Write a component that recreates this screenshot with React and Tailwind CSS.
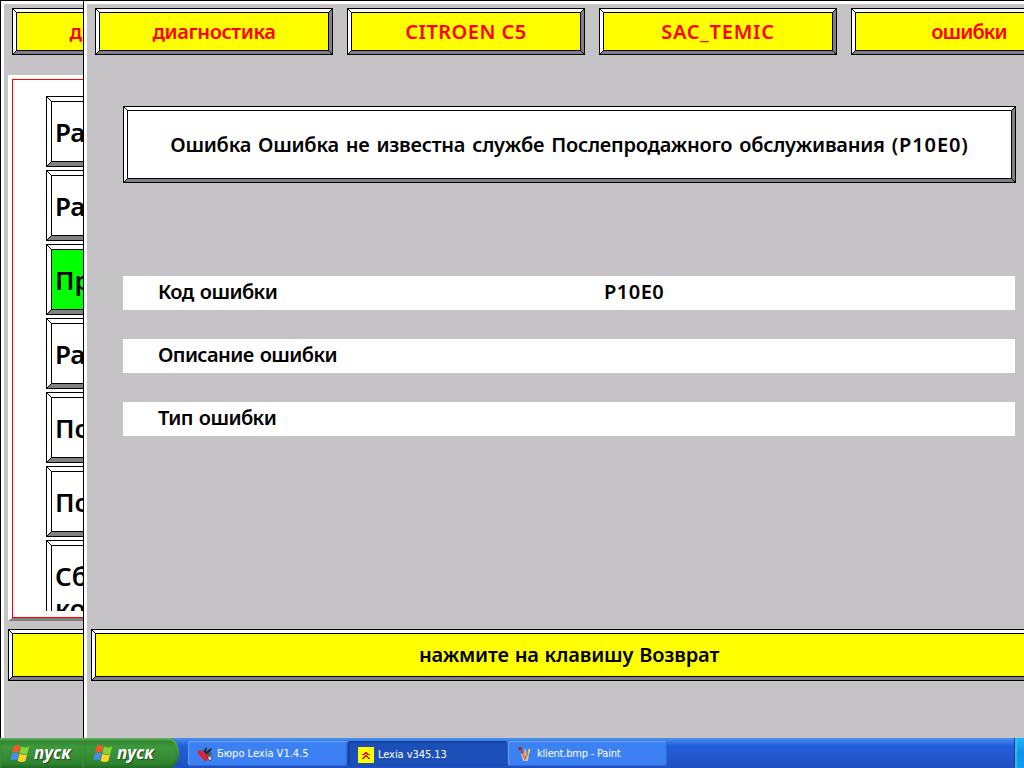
const crumbs = [
  { label: "диагностика", spacing: "tracking-[-0.4px]" },
  { label: "CITROEN C5", spacing: "tracking-[0.5px]" },
  { label: "SAC_TEMIC", spacing: "tracking-[0.8px]" },
  { label: "ошибки", spacing: "tracking-[-0.9px] pr-[2px]" },
];

const menu = [
  { label: "Ра" },
  { label: "Ра" },
  { label: "Пр", active: true },
  { label: "Ра" },
  { label: "По" },
  { label: "По" },
  { label: "Сб", more: "ко" },
];

const rows = [
  { name: "Код ошибки", value: "P10E0" },
  { name: "Описание ошибки", value: "" },
  { name: "Тип ошибки", value: "" },
];

function Corner({ className, size, flip }) {
  return (
    <svg
      className={`absolute ${className}`}
      width={size}
      height={size}
      viewBox={`0 0 ${size} ${size}`}
      shapeRendering="crispEdges"
    >
      {Array.from({ length: size }, (_, i) => (
        <rect key={i} x={i} y={flip ? size - 1 - i : i} width="1" height="1" />
      ))}
    </svg>
  );
}

function Bevel({ className, face = "bg-white", thick = false, children }) {
  const size = thick ? 4 : 3;
  return (
    <div className={`relative flex shrink-0 border border-black ${className}`}>
      <div
        className={`flex w-full border-t-white border-l-white border-r-[#808080] border-b-[#808080] ${thick ? "border-4" : "border-3"}`}
      >
        <div
          className={`flex w-full items-center border border-black ${face}`}
        >
          {children}
        </div>
      </div>
      <Corner size={size} className="left-0 top-0" />
      <Corner size={size} className="right-0 top-0" flip />
      <Corner size={size} className="left-0 bottom-0" flip />
      <Corner size={size} className="right-0 bottom-0" />
    </div>
  );
}

function Flag() {
  return (
    <svg width="20" height="19" viewBox="0 0 20 19">
      <path d="M3.500 2.500C6 .8 8 .8 10.300 1.700L8.700 8.700C6.500 7.700 4.500 7.800 2 9.200Z" fill="#f0582a" />
      <path d="M11 2.200C13.500 3.800 16 3.800 19.300 2.200L17.400 9.200C14.500 10.500 12 10.200 9.500 9Z" fill="#8bd13a" />
      <path d="M1.900 10C4.500 8.500 6.500 8.600 8.500 9.500L6.900 16.200C4.800 15 2.800 15.200 .3 16.500Z" fill="#4a8cf5" />
      <path d="M9.300 9.800C12 11 14.500 11.100 17.200 9.900L15.400 17C12.500 18.500 10 18 7.600 16.700Z" fill="#fbd22c" />
    </svg>
  );
}

function Start({ className }) {
  return (
    <div
      className={`flex h-[30px] shrink-0 items-center overflow-hidden bg-linear-to-b from-[#2d7a2c] via-[#3d9a3c] via-30% to-[#2c7c2b] pl-2.5 shadow-[inset_0_2px_2px_#62b45f,inset_0_-2px_3px_#206a24] ${className}`}
    >
      <Flag />
      <span className="ml-1 font-['Open_Sans','Noto_Sans',sans-serif] text-[17px] font-bold italic leading-[22px] text-white [text-shadow:1px_1px_1px_#1d4d1c]">
        пуск
      </span>
    </div>
  );
}

function BackWindow() {
  return (
    <div className="flex h-full w-[83px] shrink-0 flex-col overflow-hidden">
      <div className="flex h-[738px] flex-col overflow-hidden border-l border-t border-black">
        <div className="flex h-full flex-col border-l-3 border-t-3 border-white bg-[#c6c3c6]">
          <Bevel className="ml-2 mt-1 h-[47px] w-[238px]" face="bg-[#ff0]">
            <span className="w-full text-center text-[20px] font-semibold tracking-[-0.4px] text-[#f00]">
              диагностика
            </span>
          </Bevel>
          <div className="ml-1 mt-5 flex h-[546px] w-[900px] shrink-0 border-4 border-b-3 border-white border-b-[#808080]">
            <div className="flex w-full flex-col border border-[#f00] bg-white pl-[33px] pt-4">
              <div className="flex h-[515px] flex-col gap-[3px] overflow-hidden">
                {menu.map((item, i) => (
                  <Bevel
                    key={i}
                    thick
                    className={item.more ? "h-[110px] w-[800px]" : "h-[71px] w-[800px]"}
                    face={item.active ? "bg-[#0f0]" : "bg-white"}
                  >
                    <span
                      className={`pl-[3px] text-[26px] font-semibold leading-[32px] ${item.more ? "self-start pt-[14px]" : ""}`}
                    >
                      {item.label}
                      {item.more && <span className="block">{item.more}</span>}
                    </span>
                  </Bevel>
                ))}
              </div>
            </div>
          </div>
          <Bevel className="ml-1 mt-2 h-[52px] w-[960px]" face="bg-[#ff0]" />
        </div>
      </div>
      <Start className="w-[83px]" />
    </div>
  );
}

function FrontWindow() {
  return (
    <div className="flex h-[738px] flex-col overflow-hidden border-l border-t border-black">
      <div className="flex h-full flex-col border-l-3 border-t-3 border-white bg-[#c6c3c6]">
        <div className="ml-2 mt-1 flex gap-3.5">
          {crumbs.map((crumb) => (
            <Bevel key={crumb.label} className="h-[47px] w-[238px]" face="bg-[#ff0]">
              <span
                className={`w-full text-center text-[20px] font-semibold text-[#f00] ${crumb.spacing}`}
              >
                {crumb.label}
              </span>
            </Bevel>
          ))}
        </div>
        <Bevel className="ml-9 mt-[51px] h-[77px] w-[893px]">
          <span className="w-full whitespace-nowrap text-center text-[20px] font-semibold tracking-[-0.25px] [word-spacing:2px]">
            Ошибка Ошибка не известна службе Послепродажного обслуживания{" "}
            <span className="tracking-[0.9px]">(P10E0)</span>
          </span>
        </Bevel>
        <div className="ml-9 mt-[93px] flex w-[892px] flex-col gap-[29px] text-[20px] font-semibold">
          {rows.map((row) => (
            <div key={row.name} className="flex h-[34px] items-center bg-white pb-0.5 pl-[35px]">
              <span className="w-[446px] tracking-[-0.6px] [word-spacing:1.5px]">{row.name}</span>
              <span className="tracking-[0.5px]">{row.value}</span>
            </div>
          ))}
        </div>
        <Bevel className="ml-1 mt-[193px] h-[52px] w-[956px]" face="bg-[#ff0]">
          <span className="w-full text-center text-[20px] font-semibold tracking-[-0.15px] [word-spacing:0.8px]">
            нажмите на клавишу Возврат
          </span>
        </Bevel>
      </div>
    </div>
  );
}

function KnifeIcon() {
  return (
    <svg width="16" height="16" viewBox="0 0 16 16">
      <path d="M4 3l3 2 2-4 1 1-1 4 5-4 1 1-5 6z" fill="#222" />
      <path d="M.5 4.500L3 4l8 6-.5 4-2 1.500-7-7z" fill="#e3202c" />
      <path d="M9 8l5-2 1 2-4 2z" fill="#555" />
      <path d="M11 10h3l1 3-2 2-2-2z" fill="#ccc" stroke="#333" strokeWidth=".7" />
    </svg>
  );
}

function LexiaIcon() {
  return (
    <svg width="16" height="16" viewBox="0 0 16 16" shapeRendering="crispEdges">
      <path d="M0 0h16v16H0z" fill="#ff0" />
      <path d="M7 5h2v1H7zM6 6h4v1H6zM4 7h3v1H4zM9 7h3v1H9zM7 8h2v1H7zM6 9h4v1H6zM5 10h2v1H5zM9 10h2v1H9zM4 11h2v1H4zM10 11h2v1h-2z" fill="#f00" />
    </svg>
  );
}

function PaintIcon() {
  return (
    <svg width="16" height="16" viewBox="0 0 16 16">
      <path d="M3.500 2l3 8" stroke="#c33b22" strokeWidth="1.600" />
      <path d="M8 3v7" stroke="#f0b080" strokeWidth="1.600" />
      <path d="M12.500 3l-2 7" stroke="#f4d23c" strokeWidth="2" />
      <path d="M1.500 1h3v3h-3z" fill="#8c3020" />
      <path d="M4 8l8-1-1 8H6z" fill="#b9cbe0" />
      <path d="M5.500 7l2.500 6 2.500-6" fill="none" stroke="#e8702a" strokeWidth="1.800" />
    </svg>
  );
}

const tasks = [
  { label: "Бюро Lexia V1.4.5", icon: <KnifeIcon />, spacing: "tracking-[0px]" },
  { label: "Lexia v345.13", icon: <LexiaIcon />, active: true, spacing: "tracking-[-0.05px]" },
  { label: "klient.bmp - Paint", icon: <PaintIcon />, spacing: "tracking-[-0.2px]" },
];

function Taskbar() {
  return (
    <div className="flex h-[30px] bg-linear-to-b from-[#4a92ee] via-[#245edb] via-25% to-[#1f4fc0]">
      <Start className="w-24 rounded-r-[10px_15px]" />
      <div className="ml-[9px] flex pt-[3px]">
        {tasks.map((task) => (
          <div
            key={task.label}
            className={`mr-px flex h-[25px] w-[159px] items-center rounded-[3px] text-[11px] text-white ${
              task.active
                ? "bg-[#1c50b8] pl-2.5 pt-0.5 shadow-[inset_1px_1px_2px_#0d3480]"
                : "bg-[#3c81f3] pl-[9px] shadow-[inset_1px_1px_1px_#66a2fa,inset_-1px_-1px_1px_#2c66d8]"
            }`}
          >
            {task.icon}
            <span
              className={`ml-1 whitespace-nowrap pt-px font-['DejaVu_Sans_Condensed','DejaVu_Sans',sans-serif] ${task.spacing}`}
            >
              {task.label}
            </span>
          </div>
        ))}
      </div>
      <div className="ml-auto w-2.5 border-l border-[#0f3a7c] bg-linear-to-b from-[#22b4f6] via-[#1290e8] to-[#129cf0] shadow-[inset_2px_0_1px_#1cc5fb]" />
    </div>
  );
}

export default function App() {
  return (
    <div className="flex h-[768px] w-[1024px] overflow-hidden bg-[#c6c3c6] font-['Noto_Sans','Open_Sans',sans-serif] text-black">
      <BackWindow />
      <div className="flex w-[941px] shrink-0 flex-col overflow-hidden">
        <FrontWindow />
        <Taskbar />
      </div>
    </div>
  );
}
